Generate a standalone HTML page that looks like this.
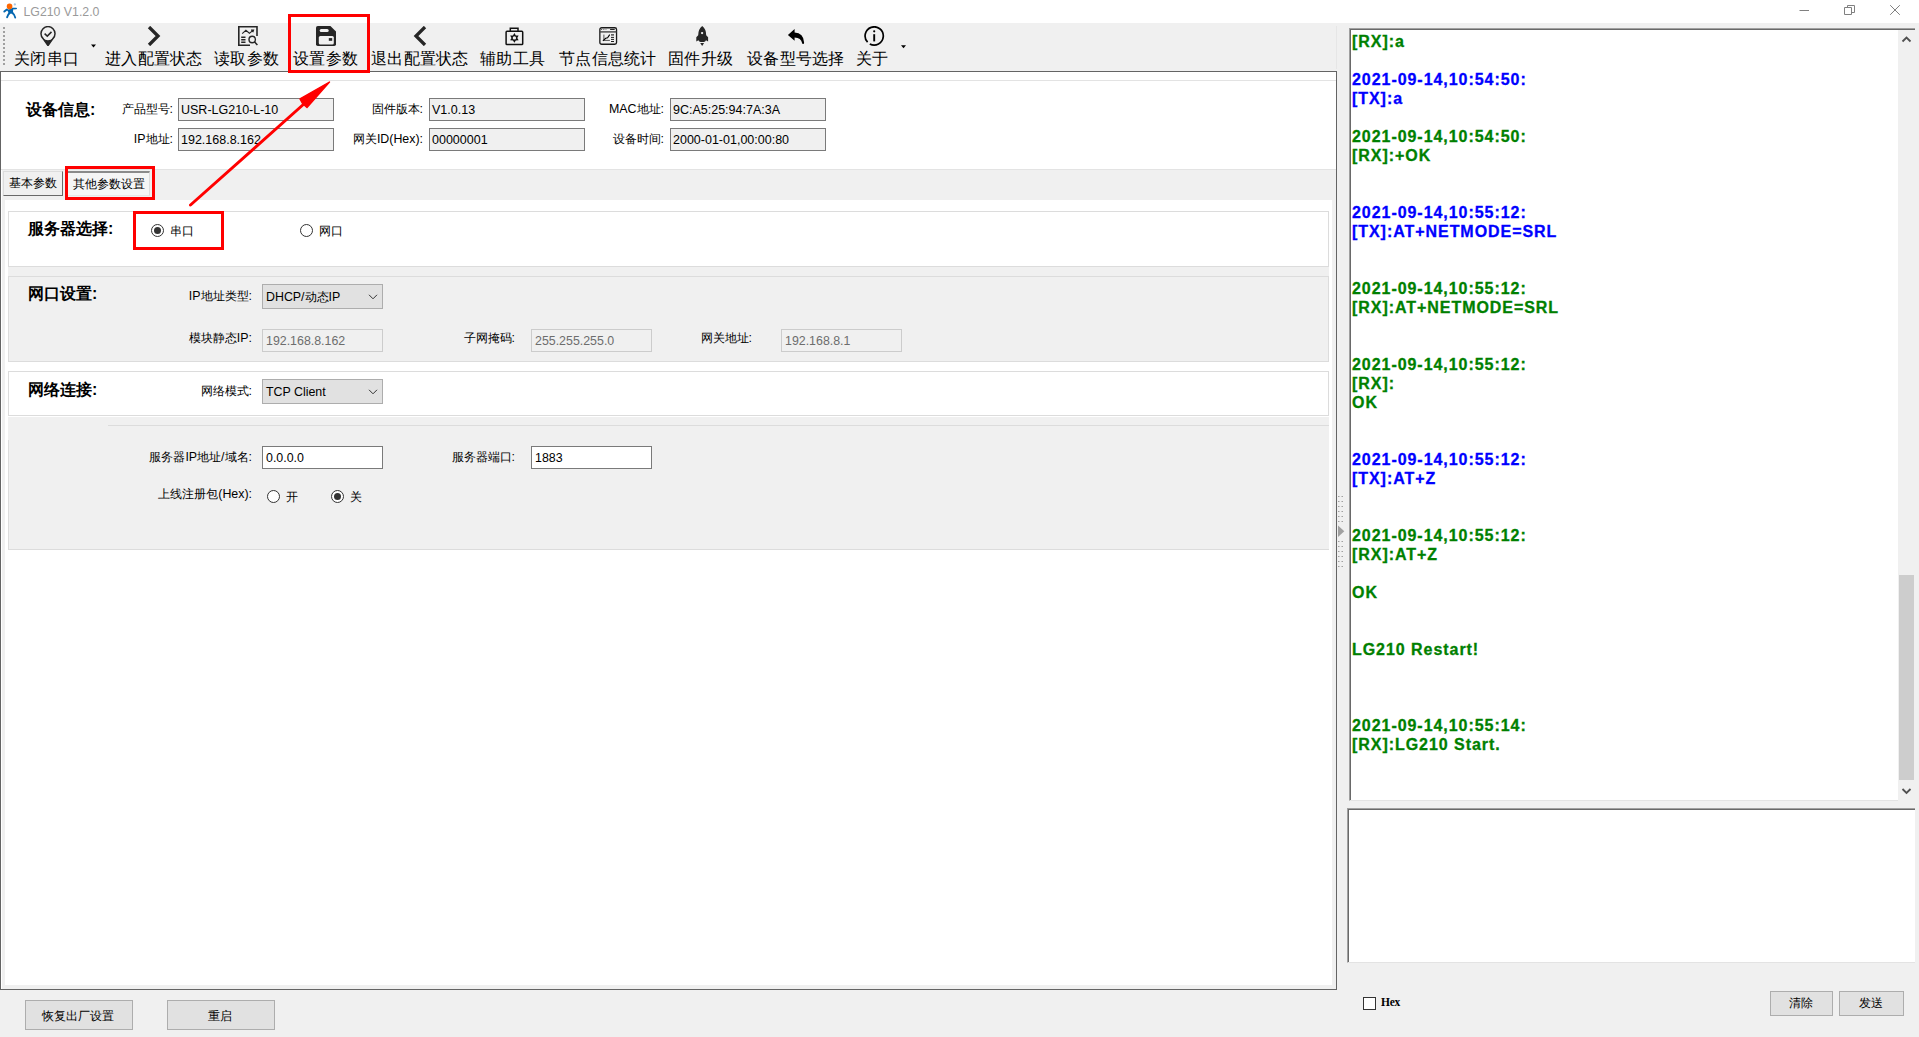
<!DOCTYPE html>
<html><head><meta charset="utf-8">
<style>
*{box-sizing:border-box;margin:0;padding:0}
html,body{width:1919px;height:1037px;overflow:hidden;background:#f0f0f0;font-family:"Liberation Sans",sans-serif;color:#000}
.a{position:absolute}
.t{position:absolute;white-space:nowrap;line-height:1}
.tb{font-size:16px;top:50.5px;color:#000;letter-spacing:0.3px}
.ic{position:absolute}
.lbl{position:absolute;white-space:nowrap;line-height:1;font-size:12.4px;text-align:right}
.hd{position:absolute;white-space:nowrap;line-height:1;font-size:16px;font-weight:bold}
.inp{position:absolute;height:23px;border:1px solid #7a7a7a;background:#f0f0f0;font-size:12.5px;padding:5px 0 0 2px;line-height:1;white-space:nowrap}
.grp{position:absolute;left:8px;width:1321px;border:1px solid #dcdcdc}
.red{position:absolute;border:3px solid #f00}
.log{position:absolute;left:1352px;top:32px;font-weight:bold;font-size:16px;line-height:19px;white-space:pre;letter-spacing:0.95px;-webkit-text-stroke:0.3px currentColor}
.g{color:#008000}.b{color:#0000ff}
.btn{position:absolute;border:1px solid #adadad;background:#e1e1e1;font-size:12px;text-align:center;line-height:1;padding-right:2px}
.radio{position:absolute;width:13px;height:13px;border:1px solid #333;border-radius:50%;background:#fff}
.radio.on::after{content:"";position:absolute;left:2px;top:2px;width:7px;height:7px;border-radius:50%;background:#333}
.combo{position:absolute;height:25px;border:1px solid #adadad;background:#e1e1e1;font-size:12.4px;padding:6px 0 0 3px;line-height:1;white-space:nowrap}
.combo svg{position:absolute;right:4px;top:9px}
.dis{position:absolute;height:23px;border:1px solid #ccc;background:#f0f0f0;color:#6d6d6d;font-size:12.4px;padding:5px 0 0 3px;line-height:1;white-space:nowrap}
.wht{position:absolute;height:23px;border:1px solid #7a7a7a;background:#fff;font-size:12.4px;padding:5px 0 0 3px;line-height:1;white-space:nowrap}
</style></head><body>
<!-- TITLE -->
<div class="a" style="left:0;top:0;width:1919px;height:23px;background:#fff"></div>
<svg class="ic" style="left:0;top:0" width="20" height="20" viewBox="0 0 20 20">
<circle cx="14.85" cy="4.45" r="1.15" fill="#a9c9e6"/>
<path d="M6.3 9.1 Q9.5 10 12.6 8 L13.2 9.8 Q12.6 11.6 13.6 13.6 L8.4 13.8 Q8.8 11.8 7.2 10.6 Z" fill="#0567b0"/>
<path d="M4.3 11.6 L6.9 9.4" stroke="#0567b0" stroke-width="1.9" stroke-linecap="round"/>
<path d="M12.4 8.6 L16.2 8.5" stroke="#0567b0" stroke-width="1.6" stroke-linecap="round"/>
<path d="M9.6 13 Q7.8 14.6 7.1 17.3" fill="none" stroke="#0567b0" stroke-width="1.9" stroke-linecap="round"/>
<path d="M12.4 13 Q14.9 14.6 15.2 17.5" fill="none" stroke="#0567b0" stroke-width="1.9" stroke-linecap="round"/>
<circle cx="9.55" cy="6.4" r="2.8" fill="#ff6600"/>
</svg>
<div class="t" style="left:23.5px;top:6px;font-size:12.3px;color:#9a9a9a">LG210 V1.2.0</div>
<svg class="ic" style="left:1795px;top:4px" width="110" height="14" viewBox="0 0 110 14">
<path d="M4.5 6.5 H14" stroke="#808080" stroke-width="1"/>
<path d="M49.5 3.5 H56.5 V10.5 H49.5 Z M52.5 3.5 V1.5 H59.5 V8.5 H56.5" fill="none" stroke="#808080" stroke-width="1"/>
<path d="M95.2 1.2 L104.8 10.8 M104.8 1.2 L95.2 10.8" stroke="#808080" stroke-width="1"/>
</svg>

<!-- TOOLBAR -->
<div class="a" style="left:1336px;top:26px;width:1px;height:43px;background:#e6e6e6"></div>
<svg class="ic" style="left:3px;top:27px" width="3" height="40" viewBox="0 0 3 40">
<g fill="#a0a0a0"><rect x="0" y="0" width="2" height="2"/><rect x="0" y="4" width="2" height="2"/><rect x="0" y="8" width="2" height="2"/><rect x="0" y="12" width="2" height="2"/><rect x="0" y="16" width="2" height="2"/><rect x="0" y="20" width="2" height="2"/><rect x="0" y="24" width="2" height="2"/><rect x="0" y="28" width="2" height="2"/><rect x="0" y="32" width="2" height="2"/><rect x="0" y="36" width="2" height="2"/></g>
</svg>
<div class="t tb" style="left:14px">关闭串口</div>
<div class="t tb" style="left:105px">进入配置状态</div>
<div class="t tb" style="left:214px">读取参数</div>
<div class="t tb" style="left:293px">设置参数</div>
<div class="t tb" style="left:371px">退出配置状态</div>
<div class="t tb" style="left:480px">辅助工具</div>
<div class="t tb" style="left:559px">节点信息统计</div>
<div class="t tb" style="left:668px">固件升级</div>
<div class="t tb" style="left:747px">设备型号选择</div>
<div class="t tb" style="left:856px">关于</div>
<!-- icons placeholder -->
<svg class="ic" style="left:40px;top:26px" width="17" height="20" viewBox="0 0 17 20">
<path d="M3.1 12.6 A7 7 0 1 1 12.9 12.6 L8 19.5 Z" fill="none" stroke="#262626" stroke-width="1.5" stroke-linejoin="round"/>
<path d="M2.6 12.2 Q8 16.2 13.4 12.2 L8 19.7 Z" fill="#262626"/>
<path d="M4.6 7.6 L7.3 10.1 L11.5 5.9" fill="none" stroke="#262626" stroke-width="1.5"/>
</svg>
<svg class="ic" style="left:90px;top:44px" width="7" height="5" viewBox="0 0 7 5"><path d="M1 0.5 H6 L3.5 3.5 Z" fill="#000"/></svg>
<svg class="ic" style="left:147px;top:26px" width="14" height="20" viewBox="0 0 14 20">
<path d="M2 1 L11 10 L2 19" fill="none" stroke="#262626" stroke-width="3.3" stroke-linejoin="miter"/>
</svg>
<svg class="ic" style="left:238px;top:26px" width="20" height="20" viewBox="0 0 20 20">
<path d="M19 10 V0.8 H0.8 V19.2 H12" fill="none" stroke="#262626" stroke-width="1.6"/>
<path d="M4.2 7.6 L7.9 4.3 L11.4 7.2 L15.2 4.4 M13 4.1 H15.6 L14.8 6.2" fill="none" stroke="#262626" stroke-width="1.1"/>
<path d="M3.2 11.2 H7.5 M3.2 13.8 H7.5 M3.2 16.3 H7.5" stroke="#262626" stroke-width="1.4"/>
<circle cx="14.2" cy="13.5" r="3.2" fill="none" stroke="#262626" stroke-width="1.4"/>
<path d="M16.4 15.8 L19.4 19" stroke="#262626" stroke-width="1.5"/>
</svg>
<svg class="ic" style="left:316px;top:26px" width="20" height="20" viewBox="0 0 20 20">
<path d="M1.8 0 H14.4 L20 5.6 V18.2 Q20 20 18.2 20 H1.8 Q0 20 0 18.2 V1.8 Q0 0 1.8 0 Z" fill="#262626"/>
<rect x="3.7" y="2.9" width="9" height="3.1" rx="1.5" fill="#f0f0f0"/>
<rect x="2.8" y="10" width="15" height="8.5" rx="1.5" fill="#f0f0f0"/>
<rect x="12.8" y="12.1" width="3.4" height="2.7" fill="#262626"/>
</svg>
<svg class="ic" style="left:413px;top:26px" width="14" height="20" viewBox="0 0 14 20">
<path d="M12 1 L3 10 L12 19" fill="none" stroke="#262626" stroke-width="3.3" stroke-linejoin="miter"/>
</svg>
<svg class="ic" style="left:505px;top:26px" width="19" height="20" viewBox="0 0 19 20">
<path d="M5.3 5.3 V2.2 H13 V5.3" fill="none" stroke="#111" stroke-width="1.5"/>
<rect x="1.1" y="5.3" width="16.6" height="13.3" rx="0.9" fill="none" stroke="#111" stroke-width="1.5"/>
<path d="M9.40 7.00 L10.85 9.39 L13.64 9.45 L12.30 11.90 L13.64 14.35 L10.85 14.41 L9.40 16.80 L7.95 14.41 L5.16 14.35 L6.50 11.90 L5.16 9.45 L7.95 9.39 Z" fill="#111"/>
<circle cx="9.4" cy="11.9" r="1.7" fill="#f0f0f0"/>
</svg>
<svg class="ic" style="left:599px;top:27px" width="19" height="19" viewBox="0 0 19 19">
<rect x="0.85" y="0.75" width="16.7" height="16.5" rx="1.8" fill="none" stroke="#1a1a1a" stroke-width="1.3"/>
<path d="M1 4.9 H17.5" stroke="#444" stroke-width="1.4"/>
<circle cx="2.6" cy="2.45" r="0.55" fill="#333"/>
<path d="M3.9 2.45 H7.6" stroke="#777" stroke-width="0.8" stroke-dasharray="1.1 0.5"/>
<path d="M11.1 2.45 H15.7" stroke="#1a1a1a" stroke-width="1"/>
<path d="M4.9 7.6 V13.4 H10.9" fill="none" stroke="#555" stroke-width="1"/>
<path d="M3.9 13.8 L6.7 11.3 L8.6 10.7 L10.7 7.6" fill="none" stroke="#000" stroke-width="1.1"/>
<path d="M12 7.9 H15" stroke="#333" stroke-width="1.3"/>
<path d="M12 10.4 H15 M12 12.4 H15 M12 14.5 H15" stroke="#111" stroke-width="0.95"/>
</svg>
<svg class="ic" style="left:696px;top:26px" width="13" height="20" viewBox="0 0 13 20">
<path d="M6.2 0.1 Q10.2 3.2 10.2 9.3 L12.1 11.3 V15.6 L10 14.2 Q9.3 15.9 7.8 15.9 H4.6 Q3.1 15.9 2.4 14.2 L0.3 15.6 V11.3 L2.2 9.3 Q2.2 3.2 6.2 0.1 Z" fill="#262626"/>
<circle cx="6.1" cy="7.1" r="1.15" fill="#f8f8f8"/>
<path d="M4.2 17 H8.1 L6.15 19.9 Z" fill="#262626"/>
</svg>
<svg class="ic" style="left:787px;top:28px" width="18" height="17" viewBox="0 0 18 17">
<path d="M0.9 6.9 L7.6 1 V4.4 Q16.6 4.9 17.1 14.4 Q17.1 16.1 16.1 16.1 Q15.1 16.1 15 14.8 Q14.2 9.8 7.6 9.4 V12.8 Z" fill="#000"/>
</svg>
<svg class="ic" style="left:864px;top:26px" width="21" height="20" viewBox="0 0 21 20">
<path d="M3.6 16.2 A9.1 9.1 0 1 1 5.8 17.9" fill="none" stroke="#000" stroke-width="1.7"/>
<circle cx="10.2" cy="5.3" r="1.1" fill="#000"/>
<path d="M10.2 8.2 V15.4" stroke="#000" stroke-width="1.9"/>
</svg>
<svg class="ic" style="left:900px;top:45px" width="7" height="5" viewBox="0 0 7 5"><path d="M1 0.2 H6 L3.5 3.2 Z" fill="#000"/></svg>


<!-- MAIN PANEL -->
<div class="a" style="left:0;top:71px;width:1337px;height:919px;background:#fff;border:1px solid #646464;border-width:1px 1px 2px 1px"></div>
<div class="a" style="left:1px;top:80px;width:1335px;height:1px;background:#e3e3e3"></div>
<div class="hd" style="left:26px;top:102px">设备信息:</div>
<div class="lbl" style="right:calc(1919px - 173px);top:103px">产品型号:</div>
<div class="inp" style="left:178px;top:98px;width:156px">USR-LG210-L-10</div>
<div class="lbl" style="right:calc(1919px - 173px);top:133px">IP地址:</div>
<div class="inp" style="left:178px;top:128px;width:156px">192.168.8.162</div>
<div class="lbl" style="right:calc(1919px - 423px);top:103px">固件版本:</div>
<div class="inp" style="left:429px;top:98px;width:156px">V1.0.13</div>
<div class="lbl" style="right:calc(1919px - 423px);top:133px">网关ID(Hex):</div>
<div class="inp" style="left:429px;top:128px;width:156px">00000001</div>
<div class="lbl" style="right:calc(1919px - 664px);top:103px">MAC地址:</div>
<div class="inp" style="left:670px;top:98px;width:156px">9C:A5:25:94:7A:3A</div>
<div class="lbl" style="right:calc(1919px - 664px);top:133px">设备时间:</div>
<div class="inp" style="left:670px;top:128px;width:156px">2000-01-01,00:00:80</div>
<!-- tab strip -->
<div class="a" style="left:1px;top:169px;width:1335px;height:1px;background:#e3e3e3"></div>
<div class="a" style="left:1px;top:170px;width:1335px;height:819px;background:#f0f0f0;border-left:1px solid #fff"></div>
<div class="a" style="left:3px;top:171px;width:60px;height:25px;background:#f0f0f0;border:1px solid #fff;border-right:1px solid #696969;border-bottom:1px solid #696969;border-top:1px solid #dcdcdc;border-left:1px solid #dcdcdc"></div>
<div class="t" style="left:9px;top:177px;font-size:12px">基本参数</div>
<div class="a" style="left:67px;top:171px;width:83px;height:25px;background:#f5f5f5;border-top:2px solid #8a8a8a;border-left:1px solid #fff;border-right:1px solid #dcdcdc;border-bottom:1px solid #e6e6e6"></div>
<div class="t" style="left:73px;top:178px;font-size:12px">其他参数设置</div>
<div class="a" style="left:5px;top:200px;width:1327px;height:785px;background:#fff"></div>
<!-- group 1 -->
<div class="grp" style="top:211px;height:56px;background:#fff"></div>
<div class="hd" style="left:28px;top:221px">服务器选择:</div>
<div class="radio on" style="left:151px;top:224px"></div>
<div class="t" style="left:170px;top:225px;font-size:12px">串口</div>
<div class="radio" style="left:300px;top:224px"></div>
<div class="t" style="left:319px;top:225px;font-size:12px">网口</div>
<!-- group 2 -->
<div class="a" style="left:8px;top:267px;width:1321px;height:95px;background:#f0f0f0"></div>
<div class="grp" style="top:276px;height:86px;background:#f0f0f0"></div>
<div class="hd" style="left:28px;top:286px">网口设置:</div>
<div class="lbl" style="right:calc(1919px - 252px);top:290px">IP地址类型:</div>
<div class="combo" style="left:262px;top:284px;width:121px">DHCP/动态IP<svg width="10" height="6" viewBox="0 0 10 6"><path d="M1 0.8 L5 4.8 L9 0.8" fill="none" stroke="#333" stroke-width="1"/></svg></div>
<div class="lbl" style="right:calc(1919px - 252px);top:332px">模块静态IP:</div>
<div class="dis" style="left:262px;top:329px;width:121px">192.168.8.162</div>
<div class="lbl" style="right:calc(1919px - 515px);top:332px">子网掩码:</div>
<div class="dis" style="left:531px;top:329px;width:121px">255.255.255.0</div>
<div class="lbl" style="right:calc(1919px - 752px);top:332px">网关地址:</div>
<div class="dis" style="left:781px;top:329px;width:121px">192.168.8.1</div>
<!-- group 3 -->
<div class="grp" style="top:371px;height:45px;background:#fff"></div>
<div class="hd" style="left:28px;top:382px">网络连接:</div>
<div class="lbl" style="right:calc(1919px - 252px);top:385px">网络模式:</div>
<div class="combo" style="left:262px;top:379px;width:121px">TCP Client<svg width="10" height="6" viewBox="0 0 10 6"><path d="M1 0.8 L5 4.8 L9 0.8" fill="none" stroke="#333" stroke-width="1"/></svg></div>
<!-- group 4 -->
<div class="a" style="left:8px;top:417px;width:1321px;height:133px;background:#f0f0f0;border-bottom:1px solid #dcdcdc"></div><div class="a" style="left:8px;top:440px;width:1px;height:110px;background:#dcdcdc"></div>
<div class="a" style="left:108px;top:425px;width:1221px;height:1px;background:#dcdcdc"></div>
<div class="lbl" style="right:calc(1919px - 252px);top:451px">服务器IP地址/域名:</div>
<div class="wht" style="left:262px;top:446px;width:121px">0.0.0.0</div>
<div class="lbl" style="right:calc(1919px - 515px);top:451px">服务器端口:</div>
<div class="wht" style="left:531px;top:446px;width:121px">1883</div>
<div class="lbl" style="right:calc(1919px - 252px);top:488px">上线注册包(Hex):</div>
<div class="radio" style="left:267px;top:490px"></div>
<div class="t" style="left:286px;top:491px;font-size:12px">开</div>
<div class="radio on" style="left:331px;top:490px"></div>
<div class="t" style="left:350px;top:491px;font-size:12px">关</div>
<!-- bottom buttons -->
<div class="btn" style="left:25px;top:1000px;width:108px;height:30px;padding-top:9px">恢复出厂设置</div>
<div class="btn" style="left:167px;top:1000px;width:108px;height:30px;padding-top:9px">重启</div>


<!-- SPLITTER -->
<svg class="ic" style="left:1337px;top:490px" width="10" height="80" viewBox="0 0 10 80"><g fill="#a0a0a0"><rect x="1" y="6" width="1.5" height="1"/><rect x="4.5" y="6" width="1.5" height="1"/><rect x="1" y="11" width="1.5" height="1"/><rect x="4.5" y="11" width="1.5" height="1"/><rect x="1" y="16" width="1.5" height="1"/><rect x="4.5" y="16" width="1.5" height="1"/><rect x="1" y="21" width="1.5" height="1"/><rect x="4.5" y="21" width="1.5" height="1"/><rect x="1" y="26" width="1.5" height="1"/><rect x="4.5" y="26" width="1.5" height="1"/><rect x="1" y="31" width="1.5" height="1"/><rect x="4.5" y="31" width="1.5" height="1"/><rect x="1" y="51" width="1.5" height="1"/><rect x="4.5" y="51" width="1.5" height="1"/><rect x="1" y="56" width="1.5" height="1"/><rect x="4.5" y="56" width="1.5" height="1"/><rect x="1" y="61" width="1.5" height="1"/><rect x="4.5" y="61" width="1.5" height="1"/><rect x="1" y="66" width="1.5" height="1"/><rect x="4.5" y="66" width="1.5" height="1"/><rect x="1" y="71" width="1.5" height="1"/><rect x="4.5" y="71" width="1.5" height="1"/><rect x="1" y="76" width="1.5" height="1"/><rect x="4.5" y="76" width="1.5" height="1"/></g><path d="M1 35.5 L7.3 41.3 L1 47 Z" fill="#a0a0a0"/></svg>
<!-- RIGHT -->
<div class="a" style="left:1349px;top:28px;width:566px;height:773px;background:#fff;border-top:1px solid #a0a0a0;border-left:1px solid #a0a0a0;border-bottom:1px solid #e3e3e3;box-shadow:inset 1px 1px 0 #696969"></div>
<div class="log"><span class="g">[RX]:a</span>

<span class="b">2021-09-14,10:54:50:
[TX]:a</span>

<span class="g">2021-09-14,10:54:50:
[RX]:+OK</span>


<span class="b">2021-09-14,10:55:12:
[TX]:AT+NETMODE=SRL</span>


<span class="g">2021-09-14,10:55:12:
[RX]:AT+NETMODE=SRL</span>


<span class="g">2021-09-14,10:55:12:
[RX]:
OK</span>


<span class="b">2021-09-14,10:55:12:
[TX]:AT+Z</span>


<span class="g">2021-09-14,10:55:12:
[RX]:AT+Z

OK


LG210 Restart!



2021-09-14,10:55:14:
[RX]:LG210 Start.</span></div>
<!-- scrollbar -->
<div class="a" style="left:1898px;top:30px;width:17px;height:771px;background:#f0f0f0"></div>
<div class="a" style="left:1899px;top:575px;width:15px;height:205px;background:#cdcdcd"></div>
<svg class="ic" style="left:1898px;top:31px" width="17" height="17" viewBox="0 0 17 17"><path d="M4.5 10.5 L8.5 6.5 L12.5 10.5" fill="none" stroke="#505050" stroke-width="1.8"/></svg>
<svg class="ic" style="left:1898px;top:783px" width="17" height="17" viewBox="0 0 17 17"><path d="M4.5 6 L8.5 10 L12.5 6" fill="none" stroke="#505050" stroke-width="1.8"/></svg>
<!-- send box -->
<div class="a" style="left:1347px;top:808px;width:568px;height:155px;background:#fff;border-top:1px solid #a0a0a0;border-left:1px solid #a0a0a0;border-bottom:1px solid #e3e3e3;box-shadow:inset 1px 1px 0 #696969"></div>
<div class="a" style="left:1363px;top:997px;width:13px;height:13px;background:#fff;border:1px solid #333"></div>
<div class="t" style="left:1381px;top:997px;font-size:11.5px;font-weight:bold;letter-spacing:-0.3px;font-family:'Liberation Serif',serif">Hex</div>
<div class="btn" style="left:1770px;top:991px;width:63px;height:25px;padding-top:5px">清除</div>
<div class="btn" style="left:1839px;top:991px;width:65px;height:25px;padding-top:5px">发送</div>


<!-- ANNOTATIONS -->
<div class="red" style="left:288px;top:14px;width:82px;height:59px"></div>
<div class="red" style="left:65px;top:166px;width:90px;height:34px"></div>
<div class="red" style="left:133px;top:211px;width:91px;height:39px"></div>
<svg class="ic" style="left:180px;top:75px" width="160" height="140" viewBox="180 75 160 140">
<path d="M190.5 205 L305 103" stroke="#f00" stroke-width="3" stroke-linecap="round"/>
<path d="M329.5 82 L300 98.8 L302.5 103.5 L307 107.5 Z" fill="#f00" stroke="#f00" stroke-width="1.4" stroke-linejoin="round"/>
</svg>
</body></html>
